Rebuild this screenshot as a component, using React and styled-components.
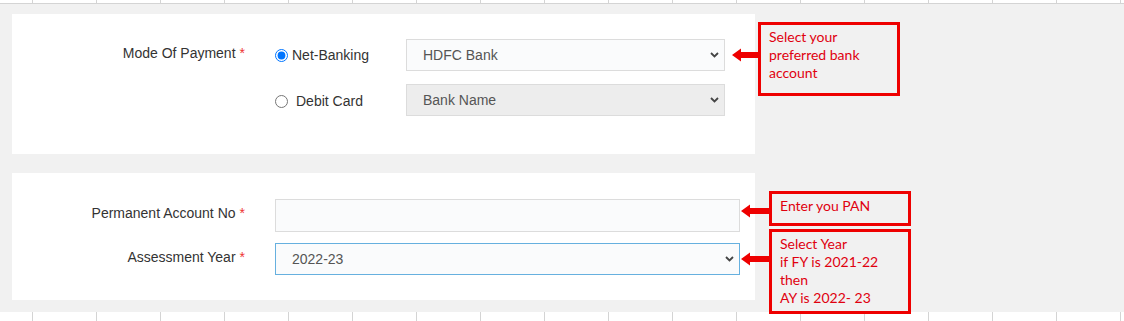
import styled, { createGlobalStyle } from "styled-components";

const GlobalStyle = createGlobalStyle`
  body {
    margin: 0;
    background: #f1f1f1;
    font-family: "Liberation Sans", Arial, sans-serif;
  }
`;

const Page = styled.div`
  width: 1124px;
  height: 321px;
  overflow: hidden;
  display: flex;
  flex-direction: column;
  background: #f1f1f1;
`;

const GridStrip = styled.div`
  height: ${(p) => p.$h}px;
  flex-shrink: 0;
  background-color: #fff;
  background-image: linear-gradient(to right, #d4d4d4 1px, transparent 1px);
  background-size: 64px 100%;
  background-position: 32px 0;
  border-bottom: ${(p) => (p.$line ? "1px solid #d4d4d4" : "none")};
`;

const Content = styled.div`
  flex: 1;
  padding: 10px 0 0 12px;
  display: flex;
  flex-direction: column;
  gap: 19px;
`;

const Section = styled.div`
  position: relative;
  width: 743px;
`;

const Card = styled.div`
  background: #fff;
  height: ${(p) => p.$h}px;
  box-sizing: border-box;
  padding-top: ${(p) => p.$pad}px;
  display: grid;
  grid-template-columns: ${(p) => p.$cols};
  grid-auto-rows: auto;
  row-gap: ${(p) => p.$gap}px;
  align-content: start;
`;

const Label = styled.label`
  text-align: right;
  padding-right: 30px;
  font-size: 14px;
  line-height: 28px;
  color: #333;
  align-self: start;
`;

const Req = styled.span`
  color: #e33;
  margin-left: 4px;
`;

const RadioOption = styled.label`
  display: flex;
  align-items: center;
  height: 32px;
  font-size: 14px;
  color: #333;
  padding-top: ${(p) => p.$shift || 0}px;
  box-sizing: border-box;

  input {
    margin: 0 ${(p) => p.$space}px 0 0;
    width: 13px;
    height: 13px;
    accent-color: #0075ff;
  }
`;

const SelectWrap = styled.div`
  position: relative;
  height: ${(p) => p.$h || 32}px;
`;

const Select = styled.select`
  appearance: none;
  width: 100%;
  height: 100%;
  box-sizing: border-box;
  border: 1px solid ${(p) => (p.$focus ? "#66b0df" : "#dcdcdc")};
  background: ${(p) => (p.disabled ? "#ededed" : "#fafbfc")};
  color: #555;
  font-family: "Liberation Sans", Arial, sans-serif;
  font-size: 14px;
  padding: 0 30px 0 16px;
  outline: none;
  opacity: 1;
`;

const Chevron = styled.svg`
  position: absolute;
  right: 6px;
  top: 50%;
  margin-top: -3px;
  pointer-events: none;
`;

const TextInput = styled.input`
  height: 33px;
  width: 100%;
  box-sizing: border-box;
  border: 1px solid #dcdcdc;
  background: #fafbfc;
  font-family: "Liberation Sans", Arial, sans-serif;
  font-size: 14px;
  padding: 0 16px;
  outline: none;
`;

const Callout = styled.div`
  position: absolute;
  left: ${(p) => p.$x}px;
  top: ${(p) => p.$y}px;
  display: flex;
  align-items: flex-start;
`;

const Arrow = styled.svg`
  display: block;
  margin-top: ${(p) => p.$at}px;
  flex-shrink: 0;
`;

const NoteBox = styled.div`
  width: 142px;
  height: ${(p) => p.$h}px;
  box-sizing: border-box;
  border: 3px solid #ee0000;
  padding: 3px 8px 0;
  font-family: Lato, "Open Sans", sans-serif;
  font-size: 14px;
  line-height: 18px;
  color: #e0000f;
`;

const ChevronIcon = () => (
  <Chevron width="9" height="6" viewBox="0 0 9 6">
    <path d="M1 1 L4.5 4.5 L8 1" fill="none" stroke="#444" strokeWidth="1.8" />
  </Chevron>
);

const DropDown = ({ value, disabled, focus }) => (
  <SelectWrap>
    <Select defaultValue={value} disabled={disabled} $focus={focus}>
      <option>{value}</option>
    </Select>
    <ChevronIcon />
  </SelectWrap>
);

const RedArrow = ({ width, at }) => (
  <Arrow width={width} height="14" viewBox={`0 0 ${width} 14`} $at={at}>
    <polygon
      points={`0,7 9,0.5 9,4 ${width},4 ${width},10 9,10 9,13.5`}
      fill="#ee0000"
    />
  </Arrow>
);

const App = () => (
  <>
    <GlobalStyle />
    <Page>
      <GridStrip $h={3} $line />
      <Content>
        <Section>
          <Card $h={140} $pad={25} $gap={13} $cols="263px 131px 319px">
            <Label>
              Mode Of Payment<Req>*</Req>
            </Label>
            <RadioOption $space={4}>
              <input type="radio" name="mode" defaultChecked />
              Net-Banking
            </RadioOption>
            <DropDown value="HDFC Bank" />
            <span />
            <RadioOption $space={8} $shift={2}>
              <input type="radio" name="mode" />
              Debit Card
            </RadioOption>
            <DropDown value="Bank Name" disabled />
          </Card>
          <Callout $x={720} $y={8}>
            <RedArrow width={26} at={26} />
            <NoteBox $h={74}>
              Select your
              <br />
              preferred bank
              <br />
              account
            </NoteBox>
          </Callout>
        </Section>

        <Section>
          <Card $h={127} $pad={26} $gap={11} $cols="263px 465px">
            <Label>
              Permanent Account No<Req>*</Req>
            </Label>
            <TextInput type="text" />
            <Label>
              Assessment Year<Req>*</Req>
            </Label>
            <DropDown value="2022-23" focus />
          </Card>
          <Callout $x={729} $y={18}>
            <RedArrow width={28} at={13} />
            <NoteBox $h={35}>Enter you PAN</NoteBox>
          </Callout>
          <Callout $x={729} $y={56}>
            <RedArrow width={28} at={23} />
            <NoteBox $h={85}>
              Select Year
              <br />
              if FY is 2021-22
              <br />
              then
              <br />
              AY is 2022- 23
            </NoteBox>
          </Callout>
        </Section>
      </Content>
      <GridStrip $h={9} />
    </Page>
  </>
);

export default App;
